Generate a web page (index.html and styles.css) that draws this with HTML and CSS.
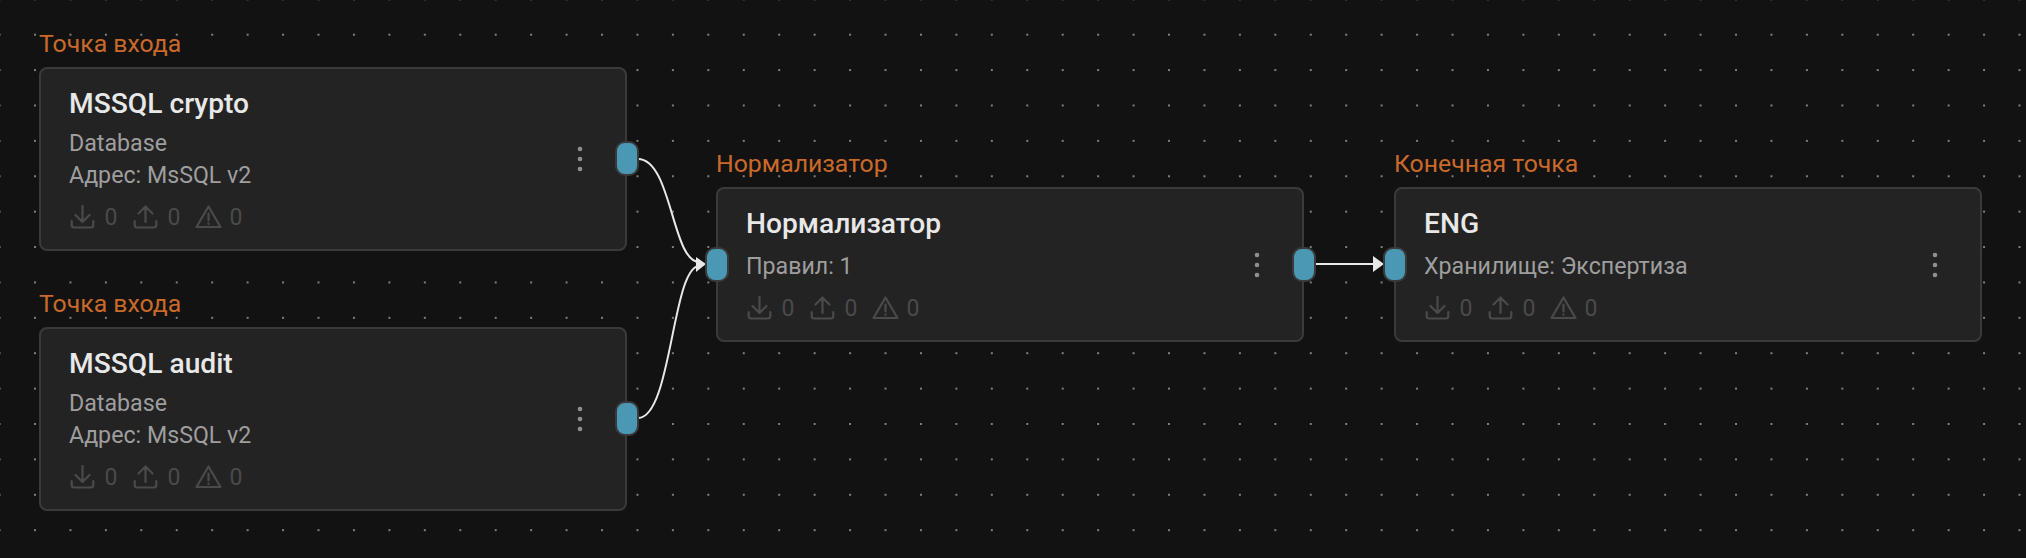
FILE: index.html
```html
<!DOCTYPE html>
<html lang="ru">

<head>
<meta charset="utf-8">
<title>Pipeline</title>
<link rel="stylesheet" href="styles.css">
</head>

<body>

<svg width="0" height="0" class="iconDefs">
    <symbol id="iconIn" viewBox="0 0 25 24">
        <path d="M1.700 16v4a2.500 2.500 0 0 0 2.500 2.500h16.600a2.500 2.500 0 0 0 2.500-2.500v-4M12.500 1v15.500M5.500 10l7 7 7-7"/>
    </symbol>
    <symbol id="iconOut" viewBox="0 0 25 24">
        <path d="M1.700 16v4a2.500 2.500 0 0 0 2.500 2.500h16.600a2.500 2.500 0 0 0 2.500-2.500v-4M12.500 17V1.500M5.500 8.500l7-7 7 7"/>
    </symbol>
    <symbol id="iconWarn" viewBox="0 0 27 24">
        <path d="M13.500 1.500 1.500 22h24zM13.500 8.500v7M13.500 18.500v.5"/>
    </symbol>
    <symbol id="iconMore" viewBox="0 0 6 26">
        <circle cx="3" cy="3" r="2.300"/>
        <circle cx="3" cy="13" r="2.300"/>
        <circle cx="3" cy="23" r="2.300"/>
    </symbol>
</svg>

<div class="canvas">

    <svg class="edges" width="2026" height="558">
        <path d="M638 159C672 159 672 264 700 262"/>
        <path d="M638 418C672 418 672 264 700 266"/>
        <path d="M1316 264H1376"/>
        <polygon points="696,257 706,264 696,272"/>
        <polygon points="1373,256 1384,264 1373,272"/>
    </svg>

    <div class="node nodeCrypto">
        <div class="nodeLabel">Точка входа</div>
        <div class="card">
            <div class="cardTitle">MSSQL crypto</div>
            <div class="cardLine">Database</div>
            <div class="cardLine">Адрес: MsSQL v2</div>
            <ul class="stats">
                <li><svg class="statIcon"><use href="#iconIn"/></svg>0</li>
                <li><svg class="statIcon"><use href="#iconOut"/></svg>0</li>
                <li><svg class="statIcon warn"><use href="#iconWarn"/></svg>0</li>
            </ul>
            <svg class="more"><use href="#iconMore"/></svg>
            <span class="handle handleOut"></span>
        </div>
    </div>

    <div class="node nodeAudit">
        <div class="nodeLabel">Точка входа</div>
        <div class="card">
            <div class="cardTitle">MSSQL audit</div>
            <div class="cardLine">Database</div>
            <div class="cardLine">Адрес: MsSQL v2</div>
            <ul class="stats">
                <li><svg class="statIcon"><use href="#iconIn"/></svg>0</li>
                <li><svg class="statIcon"><use href="#iconOut"/></svg>0</li>
                <li><svg class="statIcon warn"><use href="#iconWarn"/></svg>0</li>
            </ul>
            <svg class="more"><use href="#iconMore"/></svg>
            <span class="handle handleOut"></span>
        </div>
    </div>

    <div class="node nodeNormalizer">
        <div class="nodeLabel">Нормализатор</div>
        <div class="card">
            <div class="cardTitle">Нормализатор</div>
            <div class="cardLine single">Правил: 1</div>
            <ul class="stats">
                <li><svg class="statIcon"><use href="#iconIn"/></svg>0</li>
                <li><svg class="statIcon"><use href="#iconOut"/></svg>0</li>
                <li><svg class="statIcon warn"><use href="#iconWarn"/></svg>0</li>
            </ul>
            <svg class="more"><use href="#iconMore"/></svg>
            <span class="handle handleIn"></span>
            <span class="handle handleOut"></span>
        </div>
    </div>

    <div class="node nodeEnd">
        <div class="nodeLabel">Конечная точка</div>
        <div class="card">
            <div class="cardTitle">ENG</div>
            <div class="cardLine single">Хранилище: Экспертиза</div>
            <ul class="stats">
                <li><svg class="statIcon"><use href="#iconIn"/></svg>0</li>
                <li><svg class="statIcon"><use href="#iconOut"/></svg>0</li>
                <li><svg class="statIcon warn"><use href="#iconWarn"/></svg>0</li>
            </ul>
            <svg class="more"><use href="#iconMore"/></svg>
            <span class="handle handleIn"></span>
        </div>
    </div>

</div>

</body>

</html>
```

FILE: styles.css
```css
html, body {
    margin: 0;
    padding: 0;
    background-color: #121212;
}
.iconDefs {
    position: absolute;
}
.canvas {
    position: relative;
    width: 2026px;
    height: 558px;
    overflow: hidden;
    font-family: Roboto, "Liberation Sans", sans-serif;
    background-color: #121212;
    background-image: radial-gradient(circle, #808080 0, #808080 0.8px, transparent 1.2px);
    background-size: 35.45px 35.4px;
    background-position: 17.3px 17px;
}
.edges {
    position: absolute;
    left: 0;
    top: 0;
    z-index: 2;
}
.edges path {
    fill: none;
    stroke: #e8e8e8;
    stroke-width: 2;
}
.edges polygon {
    fill: #e8e8e8;
}
.node {
    position: absolute;
    width: 588px;
}
.nodeCrypto {
    left: 39px;
    top: 28px;
}
.nodeAudit {
    left: 39px;
    top: 288px;
}
.nodeNormalizer {
    left: 716px;
    top: 148px;
}
.nodeEnd {
    left: 1394px;
    top: 148px;
}
.nodeLabel {
    height: 32px;
    line-height: 32px;
    margin-bottom: 7px;
    font-size: 24.8px;
    color: #c96a2a;
}
.card {
    position: relative;
    box-sizing: border-box;
    padding: 18px 28px 15.8px;
    background-color: #232323;
    border: 2px solid #3a3a3a;
    border-radius: 8px;
}
.cardTitle {
    height: 34px;
    line-height: 34px;
    margin-bottom: 6px;
    font-size: 28.2px;
    font-weight: 500;
    color: #e8e8e8;
}
.cardLine {
    height: 32.3px;
    line-height: 32.3px;
    font-size: 23.2px;
    color: #9e9e9e;
}
.cardLine.single {
    margin-top: 9.4px;
}
.stats {
    display: flex;
    gap: 15.6px;
    margin: 9.6px 0 0 1px;
    padding: 0;
    list-style: none;
    height: 32px;
    font-size: 23px;
    color: #4a4a4a;
}
.stats li {
    display: flex;
    align-items: center;
    gap: 9.5px;
}
.statIcon {
    width: 25px;
    height: 24px;
    fill: none;
    stroke: #4a4a4a;
    stroke-width: 2.2;
    stroke-linecap: round;
    stroke-linejoin: round;
}
.statIcon.warn {
    width: 27px;
    margin: 0 -2px 0 -1px;
}
.more {
    position: absolute;
    right: 42px;
    top: 50%;
    width: 6px;
    height: 26px;
    margin-top: -13px;
    fill: #8f8f8f;
}
.handle {
    position: absolute;
    top: 50%;
    box-sizing: border-box;
    width: 24px;
    height: 35px;
    margin-top: -17.5px;
    background-color: #4a98b3;
    border: 2px solid #3a3a3a;
    border-radius: 10px;
    z-index: 3;
}
.handleIn {
    left: -13px;
}
.handleOut {
    right: -14px;
}
```
